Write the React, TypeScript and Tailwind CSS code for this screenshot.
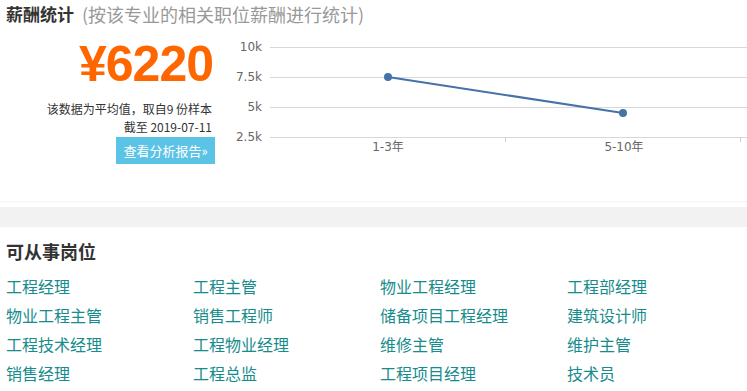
import React from "react";

/* ---------- datos ---------- */
const puestos = [
    "工程经理", "工程主管", "物业工程经理", "工程部经理",
    "物业工程主管", "销售工程师", "储备项目工程经理", "建筑设计师",
    "工程技术经理", "工程物业经理", "维修主管", "维护主管",
    "销售经理", "工程总监", "工程项目经理", "技术员",
];

const font = { fontFamily: '"Noto Sans CJK SC", "Noto Sans", sans-serif' };
const chartFont = '"DejaVu Sans", "Noto Sans CJK SC", sans-serif';

/* ---------- gráfico ---------- */
function SalaryChart() {
    const grid = [
        { y: 17, label: "10k" },
        { y: 47, label: "7.5k" },
        { y: 77, label: "5k" },
        { y: 107, label: "2.5k" },
    ];
    return (
        <svg width={527} height={130} className="block mt-[2px]">
            {grid.map((g) => (
                <g key={g.label}>
                    <line x1={50} x2={527} y1={g.y + 0.5} y2={g.y + 0.5} stroke="#d8d8d8" />
                    <text x={42} y={g.y + 4} textAnchor="end" fontSize={12} fill="#666"
                        fontFamily={chartFont}>{g.label}</text>
                </g>
            ))}
            {/* ticks eje x */}
            <line x1={285.5} x2={285.5} y1={107} y2={112} stroke="#ccc" />
            <line x1={520.5} x2={520.5} y1={107} y2={112} stroke="#ccc" />
            <text x={168} y={121} textAnchor="middle" fontSize={12} fill="#666"
                fontFamily={chartFont}>1-3年</text>
            <text x={404} y={121} textAnchor="middle" fontSize={12} fill="#666"
                fontFamily={chartFont}>5-10年</text>
            {/* serie */}
            <polyline points="168,47 403,83" fill="none" stroke="#4572a7" strokeWidth={2} />
            <circle cx={168} cy={47} r={4} fill="#4572a7" />
            <circle cx={403} cy={83} r={4} fill="#4572a7" />
        </svg>
    );
}

/* ---------- componente ---------- */
export default function App() {
    return (
        <div className="w-[747px] h-[391px] overflow-hidden bg-white" style={font}>
            {/*薪酬统计 */}
            <div className="h-[202px] border-b border-[#f4f4f4]">
                <div className="flex items-center h-[28px] pl-[6px]">
                    <span className="text-[17px] font-bold text-[#333]">薪酬统计</span>
                    <span className="text-[18px] text-[#999] ml-[8px]">(按该专业的相关职位薪酬进行统计)</span>
                </div>
                <div className="flex">
                    <div className="w-[220px] flex flex-col items-end pr-[5px]">
                        <div
                            className="mt-[11px] h-[50px] leading-[50px] text-[50px] font-bold text-[#ff6600] tracking-[-1px] pr-[2px]"
                            style={{ fontFamily: '"Liberation Sans", Arial, sans-serif' }}
                        >
                            ¥6220
                        </div>
                        <div className="mt-[11px] text-[12px] leading-[18px] text-[#333] pr-[3px]">
                            该数据为平均值，取自9 份样本
                        </div>
                        <div className="text-[12px] leading-[17px] text-[#333] pr-[3px]">
                            截至 2019-07-11
                        </div>
                        <div className="mt-[2px] w-[99px] h-[27px] bg-[#5bc3e6] text-white text-[13px] flex items-center justify-center">
                            查看分析报告»
                        </div>
                    </div>
                    <SalaryChart />
                </div>
            </div>

            {/* separador */}
            <div className="h-[20px] mt-[5px] bg-[#f2f2f2]" />

            {/* 可从事岗位 */}
            <div className="pl-[6px]">
                <div className="h-[45px] pt-[3px] flex items-center text-[18px] font-bold text-[#333]">可从事岗位</div>
                <div className="grid grid-cols-[187px_187px_187px_187px]">
                    {puestos.map((p) => (
                        <div key={p} className="h-[29px] leading-[29px] text-[16px] text-[#168c8c]">
                            {p}
                        </div>
                    ))}
                </div>
            </div>
        </div>
    );
}
